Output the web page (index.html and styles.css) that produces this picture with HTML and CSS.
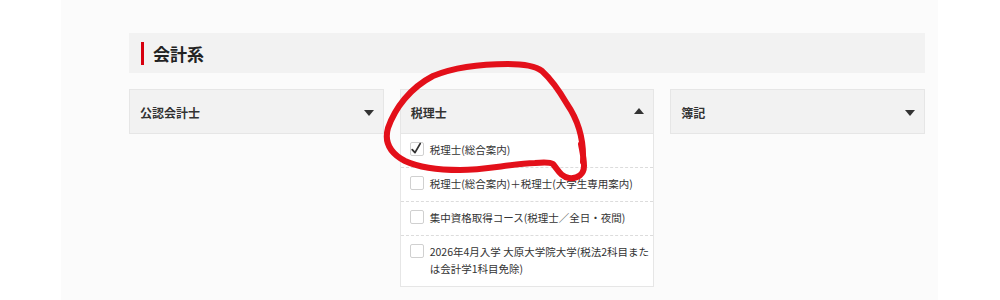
FILE: index.html
```html
<!DOCTYPE html>
<html lang="ja">
<head>
<meta charset="utf-8">
<title>会計系</title>
<link rel="stylesheet" href="styles.css">
</head>
<body>
<div class="panel">
  <div class="section-head"><span class="bar"></span><h2>会計系</h2></div>
  <div class="columns">
    <div class="dropdown">
      <div class="dd-head"><span class="dd-title">公認会計士</span><span class="tri down"></span></div>
    </div>
    <div class="dropdown open">
      <div class="dd-head"><span class="dd-title">税理士</span><span class="tri up"></span></div>
      <ul class="dd-list">
        <li class="item"><span class="cb checked"><svg viewBox="0 0 14 14" width="14" height="14"><path d="M2.2 7.6 L5 10.6 L10.2 1.6" fill="none" stroke="#333" stroke-width="1.8" stroke-linecap="round" stroke-linejoin="round"/></svg></span><span class="label">税理士(総合案内)</span></li>
        <li class="item"><span class="cb"></span><span class="label">税理士(総合案内)＋税理士(大学生専用案内)</span></li>
        <li class="item"><span class="cb"></span><span class="label">集中資格取得コース(税理士／全日・夜間)</span></li>
        <li class="item"><span class="cb"></span><span class="label">2026年4月入学 大原大学院大学(税法2科目また<br>は会計学1科目免除)</span></li>
      </ul>
    </div>
    <div class="dropdown">
      <div class="dd-head"><span class="dd-title">簿記</span><span class="tri down"></span></div>
    </div>
  </div>
</div>
<svg class="annot" viewBox="0 0 1000 300" width="1000" height="300">
  <path d="M583 162 C584 140 578 120 567 104 C560 92 552 80 542 71 C534 65 522 64 508 64 C485 64 455 67 433 76 C410 88 395 108 388 128 C384 142 390 153 405 161 C420 168 440 170 460 170 C485 170 510 164 535 163 C545 162 550 162 553 164 C558 170 561 177 569 178 C578 179 584 174 584 166 C584 158 582 150 581 144" fill="none" stroke="#e3101a" stroke-width="6" stroke-linecap="round" stroke-linejoin="round"/>
</svg>
</body>
</html>
```
FILE: styles.css
```css
html, body {
  margin: 0;
  padding: 0;
  background: #ffffff;
}
body {
  width: 1000px;
  height: 300px;
  overflow: hidden;
  position: relative;
  font-family: "Noto Sans CJK JP", "Noto Sans", sans-serif;
  color: #333;
}
.panel {
  margin-left: 61px;
  width: 877px;
  height: 300px;
  box-sizing: border-box;
  padding: 33px 13px 0 68px;
  background: #fbfbfb;
}
.section-head {
  height: 40px;
  background: #f2f2f2;
  display: flex;
  align-items: center;
  padding-left: 12px;
}
.bar {
  width: 3px;
  height: 23px;
  background: #d7000f;
  margin-right: 9px;
}
.section-head h2 {
  margin: 0;
  font-size: 17px;
  font-weight: 700;
  color: #222;
  line-height: 1;
}
.columns {
  margin-top: 16px;
  display: grid;
  grid-template-columns: 1fr 1fr 1fr;
  column-gap: 16px;
  align-items: start;
}
.dd-head {
  height: 45px;
  box-sizing: border-box;
  background: #f2f2f2;
  border: 1px solid #e6e6e6;
  display: flex;
  align-items: center;
  justify-content: space-between;
  padding: 0 9px 0 10px;
}
.dd-title {
  font-size: 12px;
  font-weight: 700;
  color: #333;
  margin-top: 1px;
}
.tri {
  width: 0;
  height: 0;
  border-left: 5.5px solid transparent;
  border-right: 5.5px solid transparent;
  margin-top: 2px;
}
.tri.down {
  border-top: 6px solid #333;
}
.tri.up {
  border-bottom: 6px solid #333;
  margin-top: -2px;
}
.dd-list {
  list-style: none;
  margin: 0;
  padding: 0;
  background: #fff;
  border: 1px solid #e6e6e6;
  border-top: none;
}
.item {
  display: flex;
  align-items: flex-start;
  padding: 7px 4px 9px 9px;
  font-size: 10.5px;
  line-height: 17px;
  color: #333;
  border-bottom: 1px dashed #dcdcdc;
}
.item:last-child {
  border-bottom: none;
}
.cb {
  flex: none;
  width: 14px;
  height: 14px;
  box-sizing: border-box;
  border: 1px solid #d0d0d0;
  border-radius: 2px;
  background: #fff;
  margin-top: 1px;
  margin-right: 6px;
  display: flex;
}
.cb.checked svg {
  margin: -1px;
}
.label {
  flex: 1;
}
.annot {
  position: absolute;
  top: 0;
  left: 0;
  pointer-events: none;
}
```
